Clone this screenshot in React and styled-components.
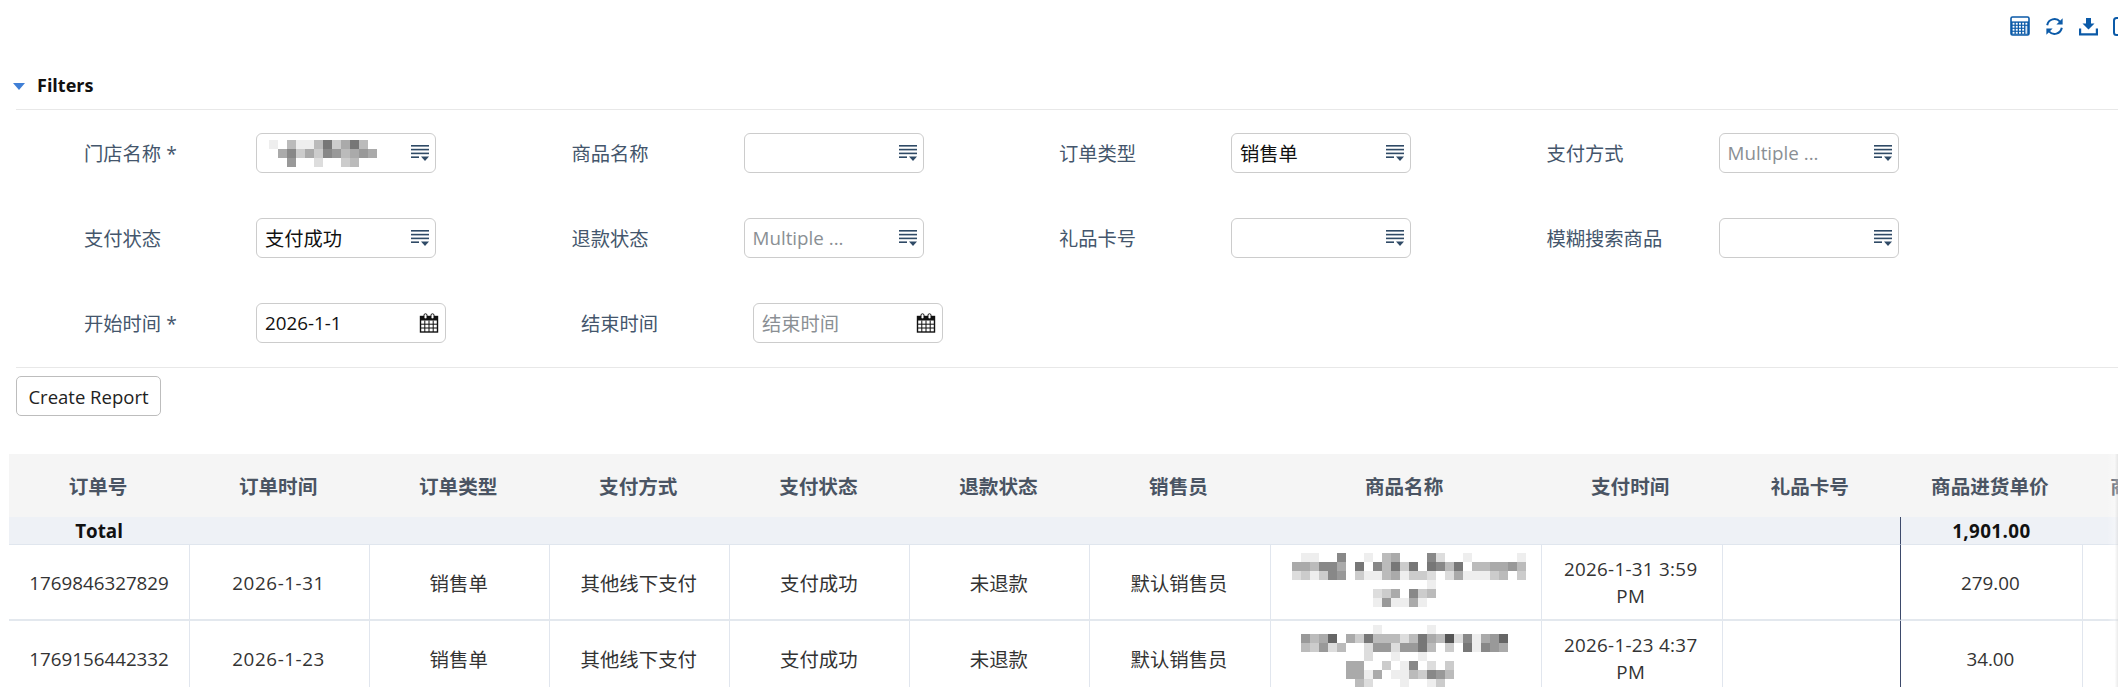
import React from 'react'
import styled, { createGlobalStyle } from 'styled-components'

const GlobalStyle = createGlobalStyle`
  html, body {
    margin: 0;
    padding: 0;
    background: #fff;
    overflow: hidden;
  }
  body {
    font-family: "Open Sans", "Noto Sans CJK SC", sans-serif;
  }
`

const Page = styled.div`
  position: relative;
  width: 2118px;
  height: 687px;
  overflow: hidden;
`

const Toolbar = styled.div`
  display: flex;
  justify-content: flex-end;
  align-items: center;
  gap: 15px;
  height: 20px;
  padding-top: 16px;
  margin-right: -14px;
  color: #0b5aa8;
`

const FiltersHeader = styled.div`
  display: flex;
  align-items: center;
  gap: 12px;
  height: 40px;
  margin-top: 29px;
  padding-left: 13px;
  padding-bottom: 4px;
  box-sizing: content-box;
`

const Caret = styled.span`
  width: 0;
  height: 0;
  margin-top: 3px;
  border-left: 6px solid transparent;
  border-right: 6px solid transparent;
  border-top: 7px solid #3f7fd6;
`

const FiltersTitle = styled.span`
  font-size: 18px;
  font-weight: 700;
  color: #111;
`

const FilterBody = styled.div`
  margin-left: 16px;
  border-top: 1px solid #e8e8e8;
  border-bottom: 1px solid #e8e8e8;
  padding: 23px 0 24px 68px;
  display: flex;
  flex-direction: column;
  gap: 45px;
`

const FilterRow = styled.div`
  display: flex;
  gap: 135.5px;
`

const Field = styled.label`
  display: flex;
  align-items: center;
`

const FieldLabel = styled.span`
  width: 172px;
  font-size: 19.3px;
  color: #44566c;
`

const InputBox = styled.div`
  display: flex;
  align-items: center;
  justify-content: space-between;
  box-sizing: border-box;
  width: ${p => p.$width || 180}px;
  height: 40px;
  padding: 0 6px 0 8px;
  border: 1px solid #cccccc;
  border-radius: 6px;
  background: #fff;
  overflow: hidden;
`

const InputText = styled.span`
  font-size: ${p => (p.$cjk ? 19.3 : 18.8)}px;
  color: ${p => (p.$placeholder ? '#8a8f94' : '#111')};
  white-space: nowrap;
`

const ButtonRow = styled.div`
  padding: 8px 0 0 16px;
`

const ReportButton = styled.button`
  box-sizing: border-box;
  width: 145px;
  height: 40px;
  padding: 0;
  border: 1px solid #bdbdbd;
  border-radius: 5px;
  background: #fff;
  color: #222;
  font-family: inherit;
  font-size: 18.5px;
`

const TableWrap = styled.div`
  margin: 38px 0 0 9px;
  overflow: hidden;
`

const Table = styled.table`
  table-layout: fixed;
  width: 2249px;
  border-collapse: separate;
  border-spacing: 0;
`

const HeadCell = styled.th`
  height: 63px;
  padding: 0 2px 0 0;
  background: #f5f5f5;
  color: #4a5463;
  font-size: 19.6px;
  font-weight: 700;
  text-align: center;
  white-space: nowrap;
`

const TotalCell = styled.td`
  box-sizing: border-box;
  height: 27px;
  padding: 1px 0 0;
  background: #eef1f6;
  border-bottom: 1px solid #e0e6ee;
  border-left: ${p => (p.$frozen ? '1px solid #3d4a6b' : 'none')};
  color: #111;
  font-size: 18.8px;
  font-weight: 700;
  letter-spacing: ${p => (p.$frozen ? 0.4 : 0)}px;
  text-align: center;
`

const Cell = styled.td`
  box-sizing: border-box;
  height: 76px;
  padding: 2px ${p => (p.$first ? 12 : 14)}px 0 12px;
  border-bottom: 2px solid #e3e8ee;
  border-left: ${p => (p.$frozen ? '1px solid #3d4a6b' : p.$first ? 'none' : '1px solid #e1e6ee')};
  color: #333;
  font-size: ${p => (p.$latin ? 18.8 : 19.4)}px;
  letter-spacing: ${p => p.$track || 0}px;
  line-height: 27px;
  text-align: center;
`

const PatchHolder = styled.div`
  display: flex;
  justify-content: center;
  margin: 0 -12px 6px -4px;
`

const InputPatch = styled.div`
  display: flex;
  margin: 0 0 0 4px;
`

const EdgeShade = styled.div`
  position: absolute;
  top: 454px;
  right: 0;
  bottom: 0;
  width: 11px;
  background: linear-gradient(to right, rgba(255, 255, 255, 0), rgba(255, 255, 255, 0.3) 70%, rgba(215, 215, 215, 0.5));
`

const colWidths = [180, 180, 180, 180, 180, 180, 180, 271, 181, 178, 182, 176]

const headers = ['订单号', '订单时间', '订单类型', '支付方式', '支付状态', '退款状态', '销售员', '商品名称', '支付时间', '礼品卡号', '商品进货单价', '商品销售单价']

const storePatch = ['efbeeb7ca7bf', 'fa8cac89ba9a', 'ff9ffdffcbff']

const patchA = [
  'feeff8ffefbafff8dffefffffe',
  'aab88af7f8b7c7f78b7fbbaa9b',
  'dcec89fceebaeccdfdaeeecbfc',
  'fffffffffffffffeffffffffff',
  'fffffffffdcaf8cbffffffffff',
  'fffffffffe9eeaefffffffffff',
]

const patchB = [
  'ffffffffefffffefffffffff',
  '9ba6fac7bbbdb7ab5d8ea96f',
  'bc9dbffd99d997bfcf7e89af',
  'fffffffdffeffeffffffffff',
  'fffffaaffcfe8fdfcfffffff',
  'fffffaaeafeebc89bfffffff',
  'ffffffbdfffeffecffffffff',
]

const rows = [
  { id: '1769846327829', date: '2026-1-31', patch: patchA, paid: '2026-1-31 3:59 PM', cost: '279.00' },
  { id: '1769156442332', date: '2026-1-23', patch: patchB, paid: '2026-1-23 4:37 PM', cost: '34.00' },
]

// mosaic that hides a name in the reference
const Mosaic = ({ rows: lines, cell = 9 }) => (
  <svg width={lines[0].length * cell} height={lines.length * cell} shapeRendering="crispEdges" style={{ display: 'block' }}>
    {lines.map((line, y) =>
      line.split('').map((c, x) => {
        if (c === 'f') return null
        const v = parseInt(c, 16) * 17
        return <rect key={x + '-' + y} x={x * cell} y={y * cell} width={cell} height={cell} fill={`rgb(${v},${v},${v})`} />
      })
    )}
  </svg>
)

const CalculatorIcon = () => (
  <svg width="20" height="20" viewBox="0 0 20 20" fill="none">
    <rect x="1" y="1" width="18" height="18" rx="1.5" stroke="currentColor" strokeWidth="1.6" />
    <rect x="1" y="5.4" width="18" height="13" fill="currentColor" />
    {[6.8, 9.8, 12.8, 15.8].map(y =>
      [2.6, 5.8, 9, 12.2].map(x => <rect key={x + '-' + y} x={x} y={y} width="1.9" height="1.9" fill="#fff" />)
    )}
    <rect x="15.4" y="6.8" width="1.9" height="1.9" fill="#fff" />
    <rect x="15.4" y="9.8" width="1.9" height="8" fill="#fff" opacity="0.85" />
  </svg>
)

const RefreshIcon = () => (
  <svg width="19" height="19" viewBox="0 0 19 19" fill="none">
    <path d="M2.2 8.2A7.4 7.4 0 0 1 15 4.6" stroke="currentColor" strokeWidth="2" />
    <path d="M16.8 10.8A7.4 7.4 0 0 1 4 14.4" stroke="currentColor" strokeWidth="2" />
    <path d="M17.6 1.2V7.4H11.4Z" fill="currentColor" />
    <path d="M1.4 17.8V11.6H7.6Z" fill="currentColor" />
  </svg>
)

const DownloadIcon = () => (
  <svg width="19" height="19" viewBox="0 0 19 19" fill="none">
    <path d="M7 1H12V6.5H15.5L9.5 12.5L3.5 6.5H7Z" fill="currentColor" />
    <path d="M1 11.5V17.4H18V11.5" stroke="currentColor" strokeWidth="2.4" />
  </svg>
)

const PanelIcon = () => (
  <svg width="19" height="19" viewBox="0 0 19 19" fill="none">
    <rect x="1" y="1" width="17" height="17" rx="2.5" stroke="currentColor" strokeWidth="2" />
  </svg>
)

const MultiSelectIcon = () => (
  <svg width="18" height="16" viewBox="0 0 18 16" style={{ flexShrink: 0 }}>
    <g fill="#2f4a66">
      <rect x="0" y="0" width="18" height="1.6" />
      <rect x="0" y="3.8" width="18" height="1.6" />
      <rect x="0" y="7.6" width="18" height="1.6" />
      <rect x="0" y="11.4" width="8" height="1.6" />
      <path d="M10 11.6H18L14 16Z" />
    </g>
  </svg>
)

const CalendarIcon = () => (
  <svg width="20" height="20" viewBox="0 0 20 20" fill="none" style={{ flexShrink: 0 }}>
    <rect x="1.5" y="3.5" width="17" height="15.5" stroke="#111" strokeWidth="1.4" />
    <rect x="1.5" y="3.5" width="17" height="4" fill="#111" />
    <rect x="5" y="0.8" width="3" height="5" rx="1.4" fill="#fff" stroke="#111" />
    <rect x="12" y="0.8" width="3" height="5" rx="1.4" fill="#fff" stroke="#111" />
    <path d="M1.5 11.2H18.5M1.5 15H18.5M5.8 7.5V19M10 7.5V19M14.2 7.5V19" stroke="#111" strokeWidth="1" />
  </svg>
)

const SelectField = ({ label, value, placeholder, patch }) => (
  <Field>
    <FieldLabel>{label}</FieldLabel>
    <InputBox>
      {patch ? (
        <InputPatch><Mosaic rows={patch} /></InputPatch>
      ) : (
        <InputText $cjk={!placeholder} $placeholder={!!placeholder}>{value || placeholder}</InputText>
      )}
      <MultiSelectIcon />
    </InputBox>
  </Field>
)

const DateField = ({ label, value, placeholder }) => (
  <Field>
    <FieldLabel>{label}</FieldLabel>
    <InputBox $width={189.5}>
      <InputText $cjk={!!placeholder} $placeholder={!!placeholder}>{value || placeholder}</InputText>
      <CalendarIcon />
    </InputBox>
  </Field>
)

export default function App() {
  return (
    <Page>
      <GlobalStyle />
      <Toolbar>
        <CalculatorIcon />
        <RefreshIcon />
        <DownloadIcon />
        <PanelIcon />
      </Toolbar>

      <FiltersHeader>
        <Caret />
        <FiltersTitle>Filters</FiltersTitle>
      </FiltersHeader>

      <FilterBody>
        <FilterRow>
          <SelectField label="门店名称 *" patch={storePatch} />
          <SelectField label="商品名称" />
          <SelectField label="订单类型" value="销售单" />
          <SelectField label="支付方式" placeholder="Multiple ..." />
        </FilterRow>
        <FilterRow>
          <SelectField label="支付状态" value="支付成功" />
          <SelectField label="退款状态" placeholder="Multiple ..." />
          <SelectField label="礼品卡号" />
          <SelectField label="模糊搜索商品" />
        </FilterRow>
        <FilterRow>
          <DateField label="开始时间 *" value="2026-1-1" />
          <DateField label="结束时间" placeholder="结束时间" />
        </FilterRow>
      </FilterBody>

      <ButtonRow>
        <ReportButton>Create Report</ReportButton>
      </ButtonRow>

      <TableWrap>
        <Table>
          <colgroup>
            {colWidths.map((w, i) => <col key={i} width={w} />)}
          </colgroup>
          <thead>
            <tr>
              {headers.map(h => <HeadCell key={h}>{h}</HeadCell>)}
            </tr>
          </thead>
          <tbody>
            <tr>
              <TotalCell>Total</TotalCell>
              <TotalCell colSpan={9} />
              <TotalCell $frozen>1,901.00</TotalCell>
              <TotalCell />
            </tr>
            {rows.map(r => (
              <tr key={r.id}>
                <Cell $first $latin>{r.id}</Cell>
                <Cell $latin $track={0.6}>{r.date}</Cell>
                <Cell>销售单</Cell>
                <Cell>其他线下支付</Cell>
                <Cell>支付成功</Cell>
                <Cell>未退款</Cell>
                <Cell>默认销售员</Cell>
                <Cell>
                  <PatchHolder><Mosaic rows={r.patch} /></PatchHolder>
                </Cell>
                <Cell $latin $track={0.3}>{r.paid}</Cell>
                <Cell />
                <Cell $frozen $latin>{r.cost}</Cell>
                <Cell />
              </tr>
            ))}
          </tbody>
        </Table>
      </TableWrap>

      <EdgeShade />
    </Page>
  )
}
